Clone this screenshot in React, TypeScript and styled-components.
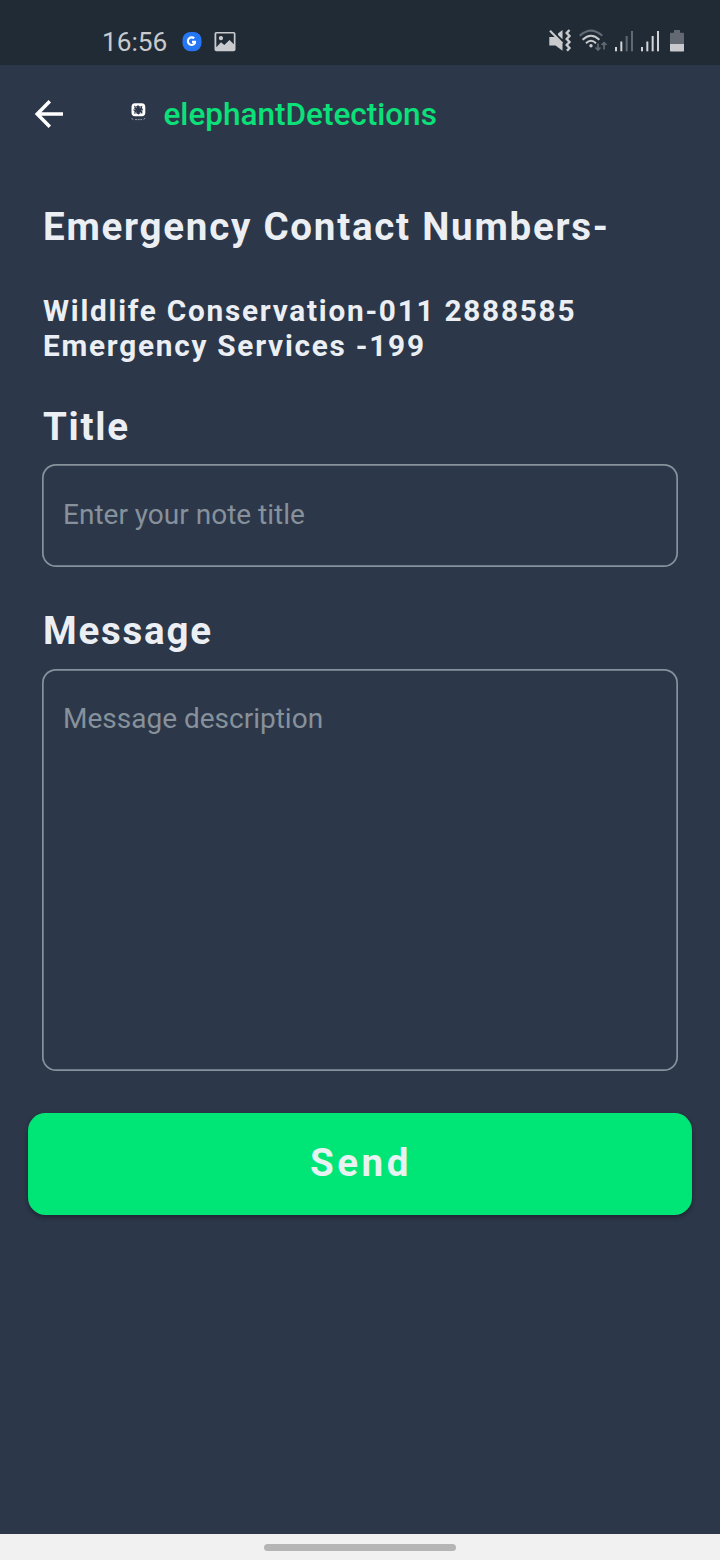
import React from 'react';
import styled, { createGlobalStyle } from 'styled-components';

const GlobalStyle = createGlobalStyle`
  * { box-sizing: border-box; }
  body { margin: 0; background: #2c3749; }
`;

const Screen = styled.div`
  display: flex;
  flex-direction: column;
  width: 720px;
  height: 1560px;
  overflow: hidden;
  background: #2c3749;
  color: #ebeff4;
  font-family: Roboto, sans-serif;
`;

const StatusBar = styled.header`
  display: flex;
  justify-content: space-between;
  height: 65px;
  padding: 28px 35px 0 102px;
  background: #212b36;
  color: #c9cacd;
`;

const StatusGroup = styled.div`
  display: flex;
  align-items: flex-start;
`;

const Clock = styled.span`
  width: 67px;
  font-size: 26.25px;
  line-height: 28px;
`;

const AppBar = styled.nav`
  display: flex;
  align-items: center;
  height: 98px;
  padding-left: 34px;
`;

const BackButton = styled.button`
  display: flex;
  width: 96px;
  padding: 0;
  border: 0;
  background: none;
  color: #fff;
`;

const AppTitle = styled.h1`
  margin: 2px 0 0 16.5px;
  color: #0be079;
  font-size: 31.5px;
  font-weight: 500;
  line-height: 38px;
`;

const Form = styled.main`
  display: flex;
  flex: 1;
  flex-direction: column;
  padding: 41px 42px 0;
`;

const Heading = styled.h2<{ $top?: number }>`
  margin: ${(p) => p.$top ?? 0}px 0 0 1px;
  font-size: 38.5px;
  font-weight: 700;
  line-height: 46px;
  letter-spacing: 1.75px;
`;

const Contacts = styled.div`
  margin: 43px 0 0 1px;
  font-size: 29.75px;
  font-weight: 700;
  line-height: 35px;
  letter-spacing: 1.75px;
`;

const field = `
  display: block;
  width: 100%;
  margin: 0;
  border: 0;
  border-radius: 14px;
  outline: 0;
  background: transparent;
  box-shadow: inset 0 0 0 1.7px #87929c;
  color: #ebeff4;
  font: 400 28px/34px Roboto, sans-serif;
  resize: none;
  &::placeholder { color: #87919b; opacity: 1; }
`;

const TitleInput = styled.input`
  ${field}
  height: 103px;
  margin-top: 14px;
  padding: 0 21px 2px;
`;

const MessageInput = styled.textarea`
  ${field}
  height: 402px;
  margin-top: 15px;
  padding: 33px 21px;
`;

const SendButton = styled.button`
  height: 102px;
  margin: 42px -14px 0;
  padding: 0 0 2px 2px;
  border: 0;
  border-radius: 17.5px;
  background: #00e676;
  box-shadow: 0 3px 4px rgba(0, 0, 0, 0.22), 0 1px 4px rgba(0, 0, 0, 0.1);
  color: #e9f2f2;
  font: 700 38.5px/46px Roboto, sans-serif;
  letter-spacing: 3.5px;
`;

const GestureBar = styled.footer`
  display: flex;
  justify-content: center;
  height: 26px;
  padding-top: 10px;
  background: #f1f1f1;
`;

const GestureHandle = styled.div`
  width: 192px;
  height: 7px;
  border-radius: 4px;
  background: #b5b5b5;
`;

const Icon = styled.svg<{ $left?: number }>`
  display: block;
  flex: none;
  margin-left: ${(p) => p.$left ?? 0}px;
`;

const DIM = '#626973';

const SignalIcon = ({ active }: { active: number }) => (
  <Icon width="18" height="24" viewBox="0 0 18 24" $left={8}>
    {[19, 13.5, 8, 3].map((y, i) => (
      <rect key={y} x={i * 5.33} y={y} width="2" height={23.3 - y} fill={i < active ? '#d3d4d7' : DIM} />
    ))}
  </Icon>
);

export default function App() {
  return (
    <Screen>
      <GlobalStyle />
      <StatusBar>
        <StatusGroup>
          <Clock>16:56</Clock>
          <Icon width="20" height="24" viewBox="0 0 20 24" $left={12.5}>
            <rect x="0.5" y="4" width="19" height="19.3" rx="8" fill="#2577f4" />
            <path d="M12.2 10.3A3.8 3.8 0 1 0 13 15V13.9H10" fill="none" stroke="#fff" strokeWidth="2.1" />
          </Icon>
          <Icon width="22" height="24" viewBox="0 0 22 24" $left={12}>
            <path
              fill="#c9cacd"
              fillRule="evenodd"
              d="M2.3 4H19.7Q21.5 4 21.5 5.8V21.5Q21.5 23.3 19.7 23.3H2.3Q.5 23.3 .5 21.5V5.8Q.5 4 2.3 4ZM2.3 5.6V19.2L7 14.3L10.3 17L15.5 12L19.8 16.2V5.6ZM7 8A2.1 2.1 0 1 1 6.9 8Z"
            />
          </Icon>
        </StatusGroup>
        <StatusGroup>
          <Icon width="23" height="24" viewBox="0 0 23 24">
            <path d="M.3 9H6.3L13.5 16V22.8L6.5 17.5H.3ZM9 5.5L13.5 2V11.3L9 7Z" fill="#c9cacd" />
            <path d="M1 2.8L13.5 15.5" stroke="#c9cacd" strokeWidth="2.1" />
            <path d="M20.5 2L17.7 5L20.5 8L17.7 11L20.5 14L17.7 17L20.5 20L18 22.8" fill="none" stroke="#c9cacd" strokeWidth="2.4" />
          </Icon>
          <Icon width="28" height="24" viewBox="0 0 28 24" $left={7}>
            <g fill="none" strokeWidth="2">
              <path d="M.7 7.8Q12 -2.6 23.3 7.8" stroke={DIM} />
              <path d="M3.6 11.7Q12 3.7 20.4 11.7" stroke="#c9cacd" />
              <path d="M7 15.3Q12 10.3 17 15.3" stroke="#c9cacd" />
              <path d="M19 15.5V22M16.5 19.5L19 22L21.5 19.5M25 21.5V15M22.5 17L25 14.6L27.5 17" stroke={DIM} strokeWidth="1.7" />
            </g>
            <circle cx="12" cy="17.8" r="1.7" fill="#c9cacd" />
          </Icon>
          <SignalIcon active={2} />
          <SignalIcon active={4} />
          <Icon width="15" height="24" viewBox="0 0 15 24" $left={11}>
            <path d="M0 5.5Q0 4.7 .7 4.7H4V2H10V4.7H13.3Q14 4.7 14 5.5V16H0Z" fill={DIM} />
            <path d="M0 16H14V22.8Q14 23.6 13.3 23.6H.7Q0 23.6 0 22.8Z" fill="#c9cacd" />
          </Icon>
        </StatusGroup>
      </StatusBar>

      <AppBar>
        <BackButton aria-label="Back">
          <Icon width="30" height="30" viewBox="0 0 30 30">
            <path d="M29 15H3.5M15.8 2.2L3.2 15L15.8 27.8" fill="none" stroke="currentColor" strokeWidth="3.5" />
          </Icon>
        </BackButton>
        <Icon width="17" height="22" viewBox="0 0 17 22">
          <path
            fill="#fff"
            d="M4.8 .2H11.8Q15.3 .2 15.3 4V9.5Q15.3 13.3 11.8 13.3H4.8Q1.5 13.3 1.5 9.5V4Q1.5 .2 4.8 .2Z"
          />
          <path
            fill="#2c3749"
            d="M4 2.5L6 3.4L8 2.2L10 3.4L12.3 2.8L12 5L13.2 7L12.2 8.5L12.5 10.6L10.3 10.2L8.5 11.4L6.3 10.2L4.2 10.8L4.6 8.5L3.2 7L4.6 5Z"
          />
          <path
            d="M5.6 3.5L6.5 5M10.7 3.5L10 5M3.7 6.2L5.5 6.8M11.2 7.2L13 7.6M6.3 8.8L5.3 10.3M10 9L10.8 10.5"
            stroke="#dfe2e6"
            strokeWidth="0.7"
          />
          <path d="M1.5 15.5L3.5 16.6M5 16.6H12M13.5 16.3L15.5 15" fill="none" stroke="#98a0ab" strokeWidth="1" strokeDasharray="2 .7" />
        </Icon>
        <AppTitle>elephantDetections</AppTitle>
      </AppBar>

      <Form>
        <Heading>Emergency Contact Numbers-</Heading>
        <Contacts>
          <div>Wildlife Conservation-011 2888585</div>
          <div>Emergency Services -199</div>
        </Contacts>
        <Heading $top={41}>Title</Heading>
        <TitleInput placeholder="Enter your note title" />
        <Heading $top={41}>Message</Heading>
        <MessageInput placeholder="Message description" />
        <SendButton>Send</SendButton>
      </Form>

      <GestureBar>
        <GestureHandle />
      </GestureBar>
    </Screen>
  );
}
